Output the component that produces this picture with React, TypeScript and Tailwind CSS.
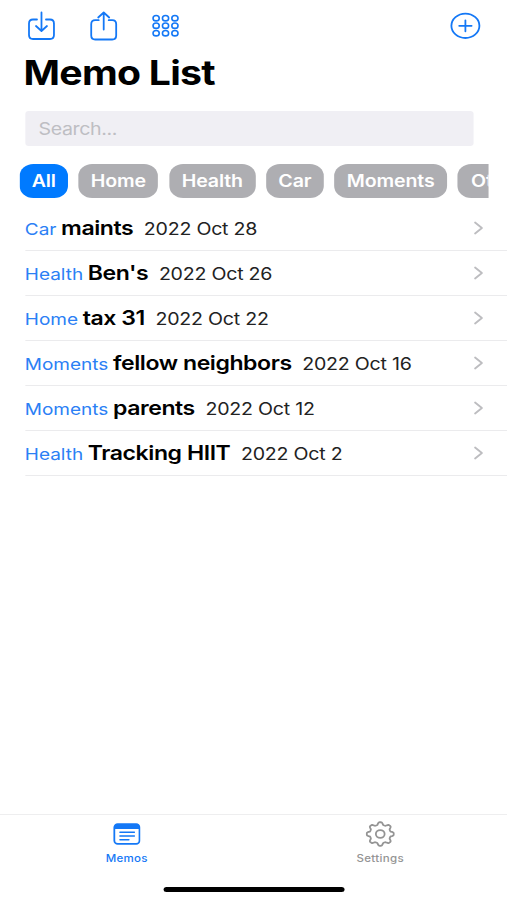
import clsx from "clsx";

const categories = [
  { name: "All", width: "w-[41.2px]" },
  { name: "Home", width: "w-[69.2px]" },
  { name: "Health", width: "w-[74.6px]" },
  { name: "Car", width: "w-[49.6px]" },
  { name: "Moments", width: "w-[97.4px]" },
  { name: "Others", width: "w-[78px]" },
];

const memos = [
  { category: "Car", title: "maints", date: "2022 Oct 28" },
  { category: "Health", title: "Ben's", date: "2022 Oct 26" },
  { category: "Home", title: "tax 31", date: "2022 Oct 22" },
  { category: "Moments", title: "fellow neighbors", date: "2022 Oct 16" },
  { category: "Moments", title: "parents", date: "2022 Oct 12" },
  { category: "Health", title: "Tracking HIIT", date: "2022 Oct 2" },
];

const stroke = {
  fill: "none",
  stroke: "currentColor",
  strokeLinecap: "round",
  strokeLinejoin: "round",
  preserveAspectRatio: "none",
} as const;

function ImportIcon() {
  return (
    <svg {...stroke} viewBox="0 0 30 32" strokeWidth="1.8" className="h-8 w-[26px]">
      <path d="M10.5 9.5H6.5Q2.5 9.5 2.5 13.5V25Q2.5 29 6.5 29H23.5Q27.5 29 27.5 25V13.5Q27.5 9.5 23.5 9.5H19.5" />
      <path d="M15 2.5V20.5M9.5 16L15 21L20.5 16" />
    </svg>
  );
}

function ShareIcon() {
  return (
    <svg {...stroke} viewBox="0 0 30 32" strokeWidth="1.8" className="h-8 w-[26px]">
      <path d="M10 10.2H6.5Q2.5 10.2 2.5 14.2V25.5Q2.5 29.5 6.5 29.5H23.5Q27.5 29.5 27.5 25.5V14.2Q27.5 10.2 23.5 10.2H20" />
      <path d="M15 19.5V2.5M9.5 7.5L15 2.5L20.5 7.5" />
    </svg>
  );
}

function GridIcon() {
  return (
    <svg {...stroke} viewBox="0 0 30 32" strokeWidth="1.6" className="h-8 w-[26px]">
      {[8.2, 15.7, 23.2].map((y) =>
        [5.2, 14.6, 24].map((x) => (
          <ellipse key={`${x}-${y}`} cx={x} cy={y} rx="3.1" ry="2.7" />
        ))
      )}
    </svg>
  );
}

function PlusIcon() {
  return (
    <svg {...stroke} viewBox="0 0 32 32" strokeWidth="1.8" className="h-8 w-[27.8px]">
      <ellipse cx="16" cy="15.8" rx="14" ry="12.2" />
      <path d="M16 10.3V21.3M9.8 15.8H22.2" />
    </svg>
  );
}

function MemosIcon() {
  return (
    <svg {...stroke} viewBox="0 0 28 22" strokeWidth="1.8" className="h-[22px] w-[24.3px]">
      <rect x="1.4" y="1.2" width="25.2" height="19.6" rx="3.4" />
      <path fill="currentColor" stroke="none" d="M1.4 6V4Q1.4 1 5 1H23Q26.6 1 26.6 4V6Z" />
      <path d="M7 9.3H21.5M7 13H21.5M7 16.7H16" strokeWidth="1.4" />
    </svg>
  );
}

// Gear outline, eight rounded teeth
function gearPath() {
  const pts: string[] = [];
  for (let i = 0; i < 96; i++) {
    const a = (i / 96) * Math.PI * 2;
    const wave = Math.tanh(2 * Math.cos(a * 8)) / Math.tanh(2);
    const r = 0.89 + 0.11 * wave;
    pts.push(`${(15 + Math.sin(a) * 13.5 * r).toFixed(2)} ${(13 - Math.cos(a) * 11.8 * r).toFixed(2)}`);
  }
  return `M${pts.join("L")}Z`;
}

function GearIcon() {
  return (
    <svg {...stroke} viewBox="0 0 30 26" strokeWidth="1.8" className="h-[26px] w-[26px]">
      <path d={gearPath()} />
      <ellipse cx="15" cy="13" rx="4.4" ry="3.9" />
    </svg>
  );
}

function Chevron() {
  return (
    <svg {...stroke} viewBox="0 0 10 14" strokeWidth="1.9" className="h-3.5 w-[8.7px] text-[#bdbdc0]">
      <path d="M1.5 1.5L8.3 7L1.5 12.5" />
    </svg>
  );
}

export default function App() {
  return (
    <div className="h-[900px] w-[507px] overflow-hidden bg-white font-['Inter',sans-serif]">
      <div className="flex h-[900px] w-[440px] origin-top-left scale-x-[1.15227] flex-col">
        <header className="pl-[21.5px]">
          <div className="flex h-[52px] items-center text-[#1478f6]">
            <div className="ml-[1.5px] flex gap-[28px]">
              <ImportIcon />
              <ShareIcon />
              <GridIcon />
            </div>
            <div className="mr-[22.1px] ml-auto">
              <PlusIcon />
            </div>
          </div>
          <h1 className="-ml-px h-[59px] text-[34px] leading-[41px] font-bold tracking-[-0.65px] text-black">
            Memo List
          </h1>
          <div className="flex h-[35px] w-[389px] items-center rounded-[3px] bg-[#f0eff4] pt-0.5 pl-3 text-[17px] tracking-[-0.35px] text-[#bebec3]">
            Search...
          </div>
        </header>

        <div className="mt-[18px] mr-[16.5px] ml-[17.4px] flex h-[33.5px] gap-[9.6px] overflow-hidden">
          {categories.map((c) => (
            <button
              key={c.name}
              className={clsx(
                "shrink-0 rounded-[12px] pt-0.5 text-[17px] font-semibold tracking-[-0.1px] text-white",
                c.width,
                c.name === "All" ? "bg-[#007aff]" : "bg-[#aeaeb2]"
              )}
            >
              {c.name}
            </button>
          ))}
        </div>

        <ul className="mt-[8.5px] pl-[21.5px]">
          {memos.map((m) => (
            <li
              key={m.title}
              className="flex h-[45px] items-center border-b border-[#ebebed] pr-[20.5px]"
            >
              <div className="flex items-baseline whitespace-nowrap">
                <span className="text-[16.5px] text-[#2b80f5]">{m.category}</span>
                <span className="ml-[4px] text-[20px] font-semibold tracking-[-0.37px] text-black">
                  {m.title}
                </span>
                <span className="ml-[9.2px] text-[17px] tracking-[-0.2px] text-[#222]">
                  {m.date}
                </span>
              </div>
              <div className="ml-auto">
                <Chevron />
              </div>
            </li>
          ))}
        </ul>

        <nav className="mt-auto flex h-[86px] flex-col border-t border-[#eeeeef]">
          <div className="flex h-[54px] text-[10px] font-medium">
            <div className="flex flex-1 flex-col items-center text-[#1478f6]">
              <div className="flex h-[38px] items-center">
                <MemosIcon />
              </div>
              <span className="pt-px leading-[9px] tracking-[0.2px]">Memos</span>
            </div>
            <div className="flex flex-1 flex-col items-center text-[#949494]">
              <div className="flex h-[38px] items-center">
                <GearIcon />
              </div>
              <span className="pt-px leading-[9px] tracking-[0.3px]">Settings</span>
            </div>
          </div>
          <div className="mx-auto mt-[17.5px] h-[5px] w-[157px] rounded-full bg-black" />
        </nav>
      </div>
    </div>
  );
}
